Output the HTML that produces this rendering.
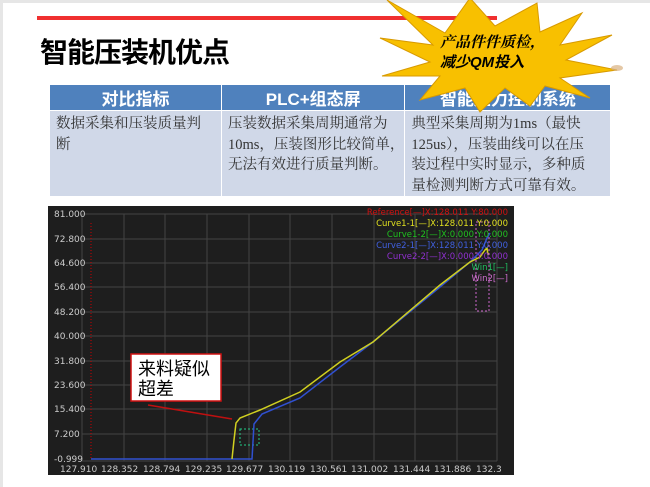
<!DOCTYPE html>
<html><head><meta charset="utf-8"><style>
*{margin:0;padding:0}
body{width:650px;height:487px;background:#fff;position:relative;overflow:hidden;font-family:"Liberation Sans","Noto Sans CJK SC",sans-serif}
.edge{position:absolute;left:0;top:0;width:3px;height:487px;background:#e6e6e6}
.topb{position:absolute;left:0;top:0;width:650px;height:3px;background:#e6e6e6}
.red{position:absolute;left:37px;top:16px;width:460px;height:4px;background:#f03030}
.title{position:absolute;left:40px;top:31px;font-size:28px;font-weight:bold;color:#000;letter-spacing:-1px}
table{position:absolute;left:49px;top:84px;border-collapse:collapse;table-layout:fixed}
th{background:#4f81bd;color:#fff;font-size:17px;height:24px;border:1px solid #fff;font-weight:bold;padding:0}
td{background:#d0d8e8;vertical-align:top;font-family:"Liberation Serif","Noto Serif CJK SC",serif;font-size:14.5px;line-height:20.5px;color:#333;height:74px;padding:3px 0 0 6px;border:1px solid #fff;white-space:nowrap;overflow:hidden}
</style></head><body>
<div class="topb"></div><div class="edge"></div>
<div class="red"></div>
<div class="title">智能压装机优点</div>
<table>
<tr><th style="width:171px">对比指标</th><th style="width:182px">PLC+组态屏</th><th style="width:205px">智能压力控制系统</th></tr>
<tr><td>数据采集和压装质量判<br>断</td><td>压装数据采集周期通常为<br>10ms，压装图形比较简单，<br>无法有效进行质量判断。</td><td>典型采集周期为1ms（最快<br>125us），压装曲线可以在压<br>装过程中实时显示，多种质<br>量检测判断方式可靠有效。</td></tr>
</table>
<svg style="position:absolute;left:0;top:0" width="650" height="487">
<polygon fill="#f8c000" stroke="#d89a00" stroke-width="1" points="387,0 445,33 470,-2 495,26 537,3 540,32 582,13 560,45 612,35 566,60 617,70 560,78 590,98 545,86 530,106 505,88 480,112 465,88 420,100 440,76 382,76 430,62 380,38 433,45"/>
<text x="440" y="47" font-family="Liberation Serif,Noto Serif CJK SC,serif" font-style="italic" font-size="15" font-weight="bold" fill="#000">产品件件质检，</text>
<text x="440" y="67" font-family="Liberation Sans,Noto Sans CJK SC,sans-serif" font-style="italic" font-size="15" font-weight="bold" fill="#000">减少QM投入</text>
<ellipse cx="617" cy="68" rx="6" ry="3" fill="#d8b080" opacity="0.7"/>
<rect x="48" y="206" width="466" height="269" fill="#1e1e1e"/>
<g stroke="#444" stroke-width="1">
<line x1="82" y1="214" x2="497" y2="214"/><line x1="82" y1="239" x2="497" y2="239"/><line x1="82" y1="263" x2="497" y2="263"/><line x1="82" y1="287" x2="497" y2="287"/><line x1="82" y1="312" x2="497" y2="312"/><line x1="82" y1="336" x2="497" y2="336"/><line x1="82" y1="361" x2="497" y2="361"/><line x1="82" y1="385" x2="497" y2="385"/><line x1="82" y1="409" x2="497" y2="409"/><line x1="82" y1="434" x2="497" y2="434"/><line x1="82" y1="461" x2="497" y2="461"/>
<line x1="82" y1="214" x2="82" y2="461"/><line x1="124" y1="214" x2="124" y2="461"/><line x1="165" y1="214" x2="165" y2="461"/><line x1="207" y1="214" x2="207" y2="461"/><line x1="249" y1="214" x2="249" y2="461"/><line x1="290" y1="214" x2="290" y2="461"/><line x1="332" y1="214" x2="332" y2="461"/><line x1="374" y1="214" x2="374" y2="461"/><line x1="415" y1="214" x2="415" y2="461"/><line x1="457" y1="214" x2="457" y2="461"/><line x1="497" y1="214" x2="497" y2="461"/>
</g>
<g font-family="DejaVu Sans,sans-serif" font-size="9" fill="#ccc">
<text x="54" y="217">81.000</text><text x="54" y="242">72.800</text><text x="54" y="266">64.600</text><text x="54" y="290">56.400</text><text x="54" y="315">48.200</text><text x="54" y="339">40.000</text><text x="54" y="364">31.800</text><text x="54" y="388">23.600</text><text x="54" y="412">15.400</text><text x="54" y="437">7.200</text><text x="54" y="462">-0.999</text>
<text x="60" y="472">127.910</text><text x="101" y="472">128.352</text><text x="143" y="472">128.794</text><text x="185" y="472">129.235</text><text x="226" y="472">129.677</text><text x="268" y="472">130.119</text><text x="310" y="472">130.561</text><text x="351" y="472">131.002</text><text x="393" y="472">131.444</text><text x="434" y="472">131.886</text><text x="476" y="472">132.3</text>
</g>
<line x1="91" y1="223" x2="91" y2="459" stroke="#c00" stroke-dasharray="1,2"/>
<rect x="240" y="429" width="19" height="16" fill="none" stroke="#2c8" stroke-dasharray="2,2"/>
<rect x="476" y="222" width="13" height="89" fill="none" stroke="#c6c" stroke-dasharray="2,2"/>
<polyline fill="none" stroke="#3050d0" stroke-width="1.5" points="91,459 252,459 254,424 262,414 300,398 340,367 373,342 440,287 470,262 482,250 487,238 490,233"/>
<polyline fill="none" stroke="#d0d020" stroke-width="1.5" points="232,459 234,440 236,423 240,418 260,410 300,392 340,362 373,342 440,285 470,262 480,257 485,250 487,248 488,255"/>
<g font-family="DejaVu Sans,sans-serif" font-size="8.5" text-anchor="end">
<text x="508" y="215" fill="#d01010">Reference[—]X:128.011 Y:80.000</text>
<text x="508" y="226" fill="#e0e020">Curve1-1[—]X:128.011 Y:0.000</text>
<text x="508" y="237" fill="#20c020">Curve1-2[—]X:0.000 Y:0.000</text>
<text x="508" y="248" fill="#4060e0">Curve2-1[—]X:128.011 Y:0.000</text>
<text x="508" y="259" fill="#9030d0">Curve2-2[—]X:0.000 Y:0.000</text>
<text x="508" y="270" fill="#20c060">Win1[—]</text>
<text x="508" y="281" fill="#d070d0">Win2[—]</text>
</g>
<line x1="148" y1="405" x2="232" y2="419" stroke="#c01010" stroke-width="1.5"/>
<rect x="131" y="354" width="90" height="47" fill="#fff" stroke="#d01010" stroke-width="1.5"/>
<text x="138" y="375" font-family="Liberation Sans,Noto Sans CJK SC,sans-serif" font-size="18" fill="#000">来料疑似</text>
<text x="138" y="395" font-family="Liberation Sans,Noto Sans CJK SC,sans-serif" font-size="18" fill="#000">超差</text>
</svg>
</body></html>
